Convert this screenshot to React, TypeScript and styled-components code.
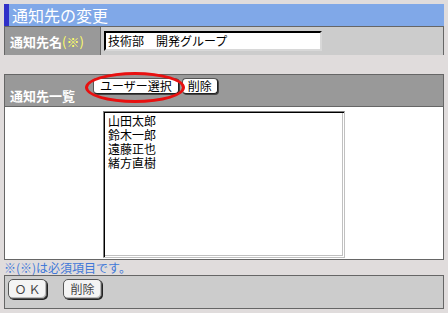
import styled, { createGlobalStyle } from 'styled-components';

const GlobalStyle = createGlobalStyle`
  body {
    margin: 0;
    background: #e0dcdc;
    font-family: "Noto Sans CJK JP", "Noto Sans", sans-serif;
    color: #000;
  }
`;

const Page = styled.div`
  width: 440px;
  padding: 4px;
`;

const TitleBar = styled.div`
  height: 22px;
  line-height: 22px;
  background: #80a8e8;
  border-left: 5px solid #3030c8;
  padding-left: 3px;
  color: #fff;
  font-size: 16px;
`;

const FormTable = styled.div`
  display: grid;
  grid-template-columns: 96px 1fr;
  border: 1px solid #666;
  height: 27px;
`;

const LabelCell = styled.div`
  background: #999;
  border-right: 1px solid #666;
  color: #fff;
  font-weight: bold;
  font-size: 13px;
  padding-left: 5px;
  display: flex;
  align-items: center;
`;

const Required = styled.span`
  color: #ffff66;
  font-weight: normal;
`;

const ValueCell = styled.div`
  background: #ccc;
  padding: 4px 3px;
`;

const TextBox = styled.div`
  width: 212px;
  height: 16px;
  background: #fff;
  border: 2px solid;
  border-color: #000 #d8d8d8 #d8d8d8 #000;
  font-size: 12px;
  line-height: 16px;
  padding-left: 2px;
  white-space: nowrap;
  overflow: hidden;
`;

const Section = styled.div`
  margin-top: 19px;
  border: 1px solid #666;
`;

const SectionHeader = styled.div`
  height: 32px;
  box-sizing: border-box;
  background: #999;
  border-bottom: 1px solid #666;
  display: flex;
  align-items: flex-start;
  padding: 3px 0 0 5px;
`;

const SectionLabel = styled.div`
  color: #fff;
  font-weight: bold;
  font-size: 13px;
  line-height: 15px;
  margin-top: 10px;
  width: 83px;
`;

const Marked = styled.span`
  position: relative;
  display: inline-flex;
  margin-right: 3px;
`;

const Ellipse = styled.span`
  position: absolute;
  left: -8px;
  right: -6px;
  top: -6px;
  bottom: -9px;
  border: 3px solid #e81010;
  border-radius: 50%;
  pointer-events: none;
`;

const SmallButton = styled.button<{ $pad?: number }>`
  height: 16px;
  padding: 0 ${(p) => p.$pad ?? 6}px;
  background: #fff;
  border: 1px solid #555;
  border-right-color: #222;
  border-bottom-color: #222;
  border-radius: 4px;
  box-shadow: 1px 1px 0 #444;
  font-family: inherit;
  font-size: 12px;
  line-height: 14px;
  color: #000;
`;

const ListArea = styled.div`
  height: 152px;
  background: #fff;
  padding: 4px 0 0 98px;
  box-sizing: border-box;
`;

const ListBox = styled.div`
  width: 242px;
  height: 147px;
  box-sizing: border-box;
  border: 1px solid;
  border-color: #808080 #c0c0c0 #c0c0c0 #808080;
  box-shadow: inset 1px 1px 0 #000, inset -1px -1px 0 #fff, inset -2px -2px 0 #c0c0c0;
  padding: 2px 4px;
  font-size: 12px;
  line-height: 14px;
`;

const ListItem = styled.div`
  white-space: nowrap;
  height: 14px;
`;

const Note = styled.div`
  color: #4078d8;
  font-size: 12px;
  line-height: 15px;
  height: 15px;
`;

const ActionBar = styled.div`
  height: 26px;
  background: #ccc;
  border: 1px solid #666;
  display: flex;
  gap: 16px;
  padding: 3px;
`;

const ActionButton = styled.button<{ $spaced?: boolean }>`
  width: 39px;
  height: 20px;
  background: #f4f4f4;
  border: 1px solid #555;
  border-radius: 5px;
  box-shadow: 1px 1px 0 #222, inset -1px -1px 0 #bbb;
  font-family: inherit;
  font-size: 12px;
  line-height: 16px;
  letter-spacing: ${(p) => (p.$spaced ? '2px' : '0')};
  padding: 0 0 0 ${(p) => (p.$spaced ? '2px' : '0')};
  color: #444;
`;

const members = ['山田太郎', '鈴木一郎', '遠藤正也', '緒方直樹'];

const App = (): JSX.Element => {
  return (
    <Page>
      <GlobalStyle />
      <TitleBar>通知先の変更</TitleBar>
      <FormTable>
        <LabelCell>
          通知先名<Required>(※)</Required>
        </LabelCell>
        <ValueCell>
          <TextBox>技術部　開発グループ</TextBox>
        </ValueCell>
      </FormTable>
      <Section>
        <SectionHeader>
          <SectionLabel>通知先一覧</SectionLabel>
          <Marked>
            <SmallButton>ユーザー選択</SmallButton>
            <Ellipse />
          </Marked>
          <SmallButton $pad={5}>削除</SmallButton>
        </SectionHeader>
        <ListArea>
          <ListBox>
            {members.map((m) => (
              <ListItem key={m}>{m}</ListItem>
            ))}
          </ListBox>
        </ListArea>
      </Section>
      <Note>※(※)は必須項目です。</Note>
      <ActionBar>
        <ActionButton $spaced>ＯＫ</ActionButton>
        <ActionButton>削除</ActionButton>
      </ActionBar>
    </Page>
  );
};

export default App;
